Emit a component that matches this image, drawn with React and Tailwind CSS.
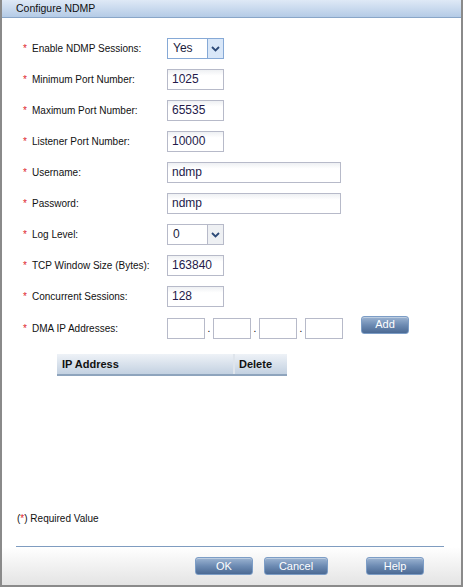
import React from "react"

const rows = [
  { label: "Enable NDMP Sessions:", type: "select", value: "Yes", active: true },
  { label: "Minimum Port Number:", value: "1025" },
  { label: "Maximum Port Number:", value: "65535" },
  { label: "Listener Port Number:", value: "10000" },
  { label: "Username:", value: "ndmp", wide: true },
  { label: "Password:", value: "ndmp", wide: true },
  { label: "Log Level:", type: "select", value: "0" },
  { label: "TCP Window Size (Bytes):", value: "163840" },
  { label: "Concurrent Sessions:", value: "128" },
]

function Chevron() {
  return (
    <svg width="9" height="6" viewBox="0 0 9 6">
      <path d="M1 1 L4.5 4.5 L8 1" fill="none" stroke="#2d4a78" strokeWidth="1.8" />
    </svg>
  )
}

function Field({ row }) {
  if (row.type === "select") {
    return (
      <div
        className={`flex h-[21px] w-[57px] border bg-white ${
          row.active ? "border-[#86a9d6]" : "border-[#b7bac9]"
        }`}
      >
        <div className="flex-1 pl-[5px] text-[12px] leading-[19px] text-[#1c1c3c]">{row.value}</div>
        <div
          className={`flex w-[16px] items-center justify-center border-l ${
            row.active ? "border-[#86a9d6] bg-[#d9e7f8]" : "border-[#b7bac9] bg-[#eef0f3]"
          }`}
        >
          <Chevron />
        </div>
      </div>
    )
  }
  return (
    <div
      className={`h-[21px] border border-[#b7bac9] bg-gradient-to-b from-[#eef0f3] to-white to-[30%] pl-[4px] text-[12px] leading-[19px] text-[#241a4a] ${
        row.wide ? "w-[174px]" : "w-[57px]"
      }`}
    >
      {row.value}
    </div>
  )
}

function Label({ children }) {
  return (
    <div className="flex w-[165px] shrink-0 items-center whitespace-nowrap pl-[21px]">
      <span className="w-[9px] text-[10px] leading-none text-[#e0242c]">*</span>
      <span className="text-[10px] text-[#111]">{children}</span>
    </div>
  )
}

function BlueButton({ children, w }) {
  return (
    <button
      className={`${w} h-[18px] rounded-[3px] border border-[#7c9dc6] bg-gradient-to-b from-[#9cb4d2] via-[#6d8bb3] to-[#4b6a94] text-[11px] leading-none text-white shadow-[inset_0_1px_0_rgba(255,255,255,0.35)]`}
    >
      {children}
    </button>
  )
}

export default function App() {
  return (
    <div
      className="flex h-[587px] w-[463px] flex-col border-b-2 border-l-2 border-r-2 border-[#8a8a8a] bg-white"
      style={{ fontFamily: '"Liberation Sans", Arial, sans-serif' }}
    >
      <div className="flex h-[18px] shrink-0 items-center border-b border-[#89a6c8] bg-gradient-to-b from-[#dfe9f6] to-[#b4cbe6] pl-[14px] text-[10.5px] text-[#111]">
        Configure NDMP
      </div>

      <div className="flex flex-1 flex-col pt-[15px]">
        {rows.map((row) => (
          <div key={row.label} className="flex h-[31px] items-center">
            <Label>{row.label}</Label>
            <Field row={row} />
          </div>
        ))}

        <div className="mt-[1px] flex h-[31px] items-center">
          <Label>DMA IP Addresses:</Label>
          <div className="flex items-center">
            {[0, 1, 2, 3].map((i) => (
              <React.Fragment key={i}>
                {i > 0 && <span className="w-[8px] text-center text-[10px] leading-none">.</span>}
                <div className="h-[21px] w-[38px] border border-[#b7bac9] bg-white" />
              </React.Fragment>
            ))}
          </div>
          <div className="ml-[18px] -mt-[11px]">
            <BlueButton w="w-[48px]">Add</BlueButton>
          </div>
        </div>

        <div className="ml-[55px] mt-[10px] flex h-[22px] w-[230px] border-b-2 border-[#8ea4bd] bg-gradient-to-b from-[#eef2f7] to-[#c3d1e1] text-[11px] font-bold text-[#111]">
          <div className="flex w-[178px] items-center border-r-2 border-[#dfe5ec] pl-[5px]">IP Address</div>
          <div className="flex flex-1 items-center pl-[4px]">Delete</div>
        </div>
      </div>

      <div className="pb-[20px] pl-[15px] text-[10px] text-[#111]">
        (<span className="text-[#e0242c]">*</span>) Required Value
      </div>
      <div className="ml-[14px] mr-[17px] h-[1px] bg-[#7f9cc0]" />
      <div className="flex h-[38px] items-center bg-gradient-to-b from-white to-[#e4e4e4] pl-[193px]">
        <BlueButton w="w-[58px]">OK</BlueButton>
        <div className="w-[11px]" />
        <BlueButton w="w-[64px]">Cancel</BlueButton>
        <div className="w-[38px]" />
        <BlueButton w="w-[58px]">Help</BlueButton>
      </div>
    </div>
  )
}
